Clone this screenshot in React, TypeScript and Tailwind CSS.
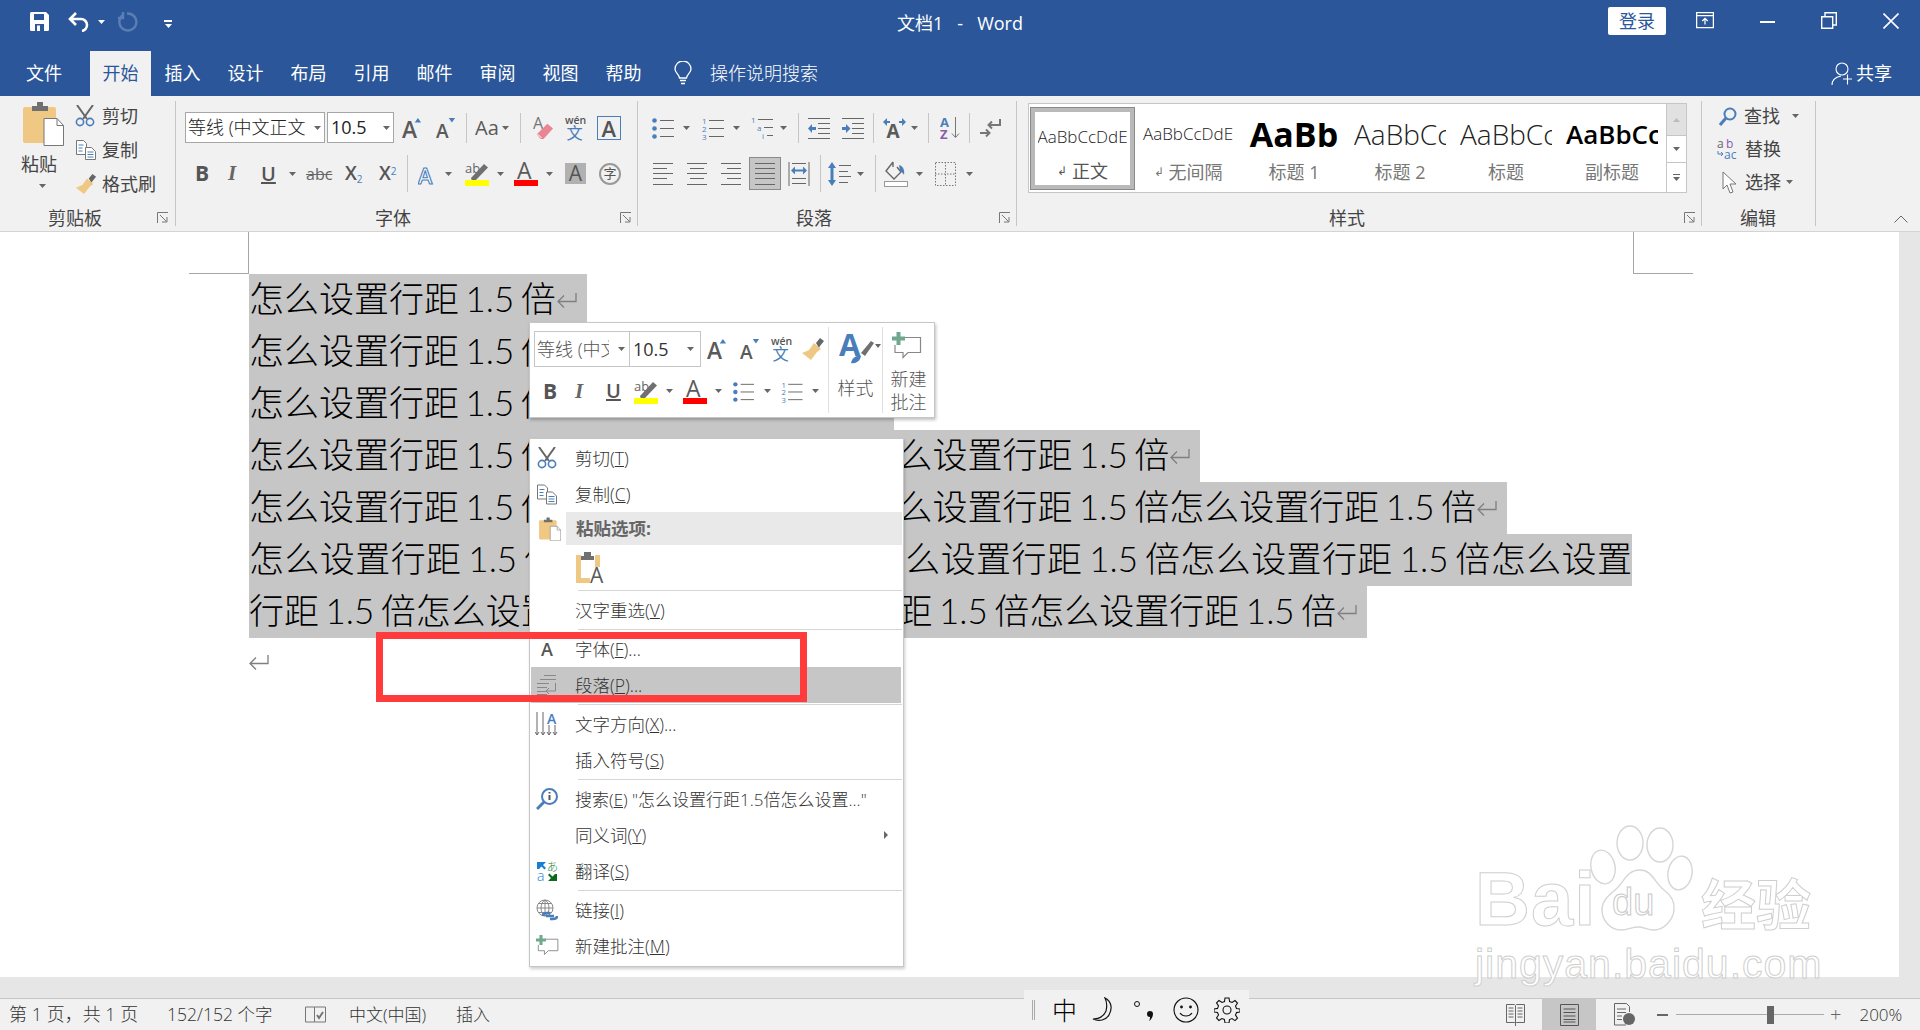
import React from "react";

const G = "#5a5a5a";
const B = "#4a7ebb";
const Dn = ({ c = "ml-[8px]", f = "#666" }: { c?: string; f?: string }) => (
  <svg viewBox="0 0 7 4" className={"w-[7px] h-[4px] shrink-0 " + c}><path d="M0 0h7L3.5 4z" fill={f} /></svg>
);
const Launcher = ({ c }: { c: string }) => (
  <svg viewBox="0 0 12 12" className={"w-[12px] h-[12px] shrink-0 " + c} fill="none" stroke="#777"><path d="M.5 11V.5H11M3 3l6.5 6.5M5 10h5V5" /></svg>
);
const Label = ({ w, children, launcher }: { w: string; children: React.ReactNode; launcher?: string }) => (
  <div className="mt-auto mb-[-1px] flex h-[18px] items-center text-[18px] leading-[18px] text-[#444]">
    <span className={"block text-center " + w}>{children}</span>
    {launcher && <Launcher c={launcher} />}
  </div>
);
const Sep = ({ c, h = "h-[37px]" }: { c: string; h?: string }) => <div className={"w-px shrink-0 bg-[#c6c6c6] " + h + " " + c} />;

const AIcon = ({ c, up, down, color = G, size = 25, stroke }: { c: string; up?: boolean; down?: boolean; color?: string; size?: number; stroke?: string }) => (
  <svg viewBox="0 0 22 24" className={"shrink-0 " + c}>
    <text x="0" y="23" fontSize={size} fontWeight="600" fill={color} stroke={stroke} strokeWidth={stroke ? 1.3 : 0}>A</text>
    {up && <path d="M14 6l3.5-5L21 6z" fill={B} />}
    {down && <path d="M14 1h7l-3.5 5z" fill={B} />}
  </svg>
);
const Wen = ({ c }: { c: string }) => (
  <svg viewBox="0 0 22 26" className={"shrink-0 " + c}>
    <text x="0" y="9" fontSize="11" fontWeight="600" fill="#555">wén</text>
    <text x="1.5" y="25" fontSize="17" fill={B}>文</text>
  </svg>
);
const Eraser = ({ c }: { c: string }) => (
  <svg viewBox="0 0 22 26" className={"shrink-0 " + c}>
    <text x="0" y="15" fontSize="17" fill="#777">A</text>
    <path d="M4 20L15 9l6 5-10 11H8z" fill="#ea8593" /><path d="M5 20l4 4" stroke="#fff" />
  </svg>
);
const Brush = ({ c }: { c: string }) => (
  <svg viewBox="0 0 24 24" className={"shrink-0 " + c}>
    <path d="M15 6l4-5 4 3-4 5-1 2z" fill="#666" />
    <path d="M13 6l7 6-4 3-6 8-9-7 7-3z" fill="#efc983" />
  </svg>
);
const Scissors = ({ c }: { c: string }) => (
  <svg viewBox="0 0 20 22" className={"shrink-0 " + c} fill="none">
    <path d="M2 0l10 14M18 0L8 14" stroke="#666" strokeWidth="2" />
    <circle cx="5" cy="17" r="3.6" stroke={B} strokeWidth="1.6" /><circle cx="15" cy="17" r="3.6" stroke={B} strokeWidth="1.6" />
  </svg>
);
const Copy = ({ c }: { c: string }) => (
  <svg viewBox="0 0 20 20" className={"shrink-0 " + c} fill="#fff" stroke="#777">
    <path d="M.5.5h7l3 3v11H.5z" /><path d="M9.5 7.5h6l4 4v8h-10z" />
    <path d="M2.5 5h5M2.5 8h4M2.5 11h4M11.5 12h6M11.5 14.500h6M11.500 17h6" stroke={B} />
  </svg>
);
const Paste = ({ c }: { c: string }) => (
  <svg viewBox="0 0 41 45" className={"shrink-0 " + c}>
    <rect x="0" y="6" width="33" height="36" rx="2" fill="#efc983" />
    <path d="M9 5h5V1h6v4h5v5H9z" fill="#707070" />
    <path d="M21 17.500h13l6.500 7v20H21z" fill="#fff" stroke="#777" /><path d="M34 17.500v7h6.500" fill="none" stroke="#777" />
  </svg>
);
const Lines = ({ c, d, w = 22, h = 22, color = "#666" }: { c: string; d: string; w?: number; h?: number; color?: string }) => (
  <svg viewBox={`0 0 ${w} ${h}`} className={"shrink-0 " + c} fill="none" stroke={color}><path d={d} /></svg>
);
const Bullets = ({ c }: { c: string }) => (
  <svg viewBox="0 0 22 22" className={"shrink-0 " + c}>
    <path d="M8 3.500h14M8 11.500h14M8 19.500h14" stroke="#666" />
    <circle cx="2.500" cy="3.500" r="2.300" fill={B} /><circle cx="2.500" cy="11.500" r="2.300" fill={B} /><circle cx="2.500" cy="19.500" r="2.300" fill={B} />
  </svg>
);
const Numbers = ({ c }: { c: string }) => (
  <svg viewBox="0 0 22 24" className={"shrink-0 " + c}>
    <path d="M7 4.500h15M7 12.500h15M7 20.500h15" stroke="#666" />
    <text x="0" y="8" fontSize="8" fill={B}>1</text><text x="0" y="16" fontSize="8" fill={B}>2</text><text x="0" y="24" fontSize="8" fill={B}>3</text>
  </svg>
);
const Multi = ({ c }: { c: string }) => (
  <svg viewBox="0 0 24 24" className={"shrink-0 " + c}>
    <path d="M7 3.500h15M13 11.500h9M16 19.500h6" stroke="#666" />
    <text x="0" y="7" fontSize="8" fill={B}>1</text><text x="6" y="15" fontSize="8" fill={B}>a</text><text x="11" y="23" fontSize="8" fill={B}>i</text>
  </svg>
);
const Indent = ({ c, flip }: { c: string; flip?: boolean }) => (
  <svg viewBox="0 0 22 22" className={"shrink-0 " + c}>
    <path d="M0 1.500h22M10 6.500h12M10 11.500h12M10 16.500h12M0 21.500h22" stroke="#666" />
    {flip ? <path d="M0 10h4V7l4.500 4.500L4 16v-3H0z" fill={B} /> : <path d="M8 10H4V7l-4 4.500L4 16v-3h4z" fill={B} />}
  </svg>
);
const AlignIcon = ({ c, d }: { c: string; d: string }) => <Lines c={c} d={d} w={20} h={24} />;

const Hl = ({ c }: { c: string }) => (
  <svg viewBox="0 0 24 25" className={"shrink-0 " + c}>
    <text x="0" y="12" fontSize="13" fill="#666">ab</text>
    <path d="M6 17L19 3l4 3.500L10 20H7z" fill="#707070" />
    <rect x="0" y="19" width="24" height="6" fill="#ffff00" />
  </svg>
);
const Fc = ({ c }: { c: string }) => (
  <svg viewBox="0 0 24 25" className={"shrink-0 " + c}>
    <text x="3" y="18" fontSize="23" fontWeight="500" fill={G}>A</text>
    <rect x="0" y="19" width="24" height="6" fill="#ff0000" />
  </svg>
);
const Comment = ({ c }: { c: string }) => (
  <svg viewBox="0 0 30 30" className={"shrink-0 " + c} fill="none">
    <path d="M12 5.500h16.500v15H16l-5 5v-5H3V13" stroke="#888" strokeWidth="1.200" />
    <path d="M4.500 0h4v4.500H13v4H8.500V13h-4V8.500H0v-4h4.500z" fill="#6fa88d" />
  </svg>
);

const Ribbon = () => (
  <div className="flex h-[136px] shrink-0 border-b border-[#d4d4d4] bg-[#f1f1f1] text-[18px] text-[#444]">
    {/* clipboard */}
    <div className="my-[5px] flex h-[125px] w-[176px] shrink-0 flex-col border-r border-[#c6c6c6]">
      <div className="flex">
        <div className="flex w-[74px] flex-col">
          <Paste c="ml-[23px] w-[41px] h-[45px]" />
          <span className="ml-[21px] mt-[8px] text-[18px] leading-[20px]">粘贴</span>
          <Dn c="ml-[39px] mt-[10px]" />
        </div>
        <div className="flex flex-col gap-[4px]">
          <div className="flex h-[30px] items-center"><Scissors c="ml-[1px] w-[20px] h-[22px]" /><span className="ml-[7px]">剪切</span></div>
          <div className="flex h-[30px] items-center"><Copy c="ml-[2px] w-[20px] h-[20px]" /><span className="ml-[6px]">复制</span></div>
          <div className="flex h-[30px] items-center"><Brush c="w-[24px] h-[22px]" /><span className="ml-[4px]">格式刷</span></div>
        </div>
      </div>
      <Label w="w-[150px]" launcher="ml-[7px]">剪贴板</Label>
    </div>
    {/* font */}
    <div className="my-[5px] flex h-[125px] w-[462px] shrink-0 flex-col border-r border-[#c6c6c6] pt-[11px]">
      <div className="flex h-[31px] items-center">
        <div className="ml-[9px] flex h-[31px] w-[140px] items-center overflow-hidden border border-[#a6a6a6] bg-white pl-[2px] text-[18px] font-light text-[#222]"><span className="w-[124px] overflow-hidden whitespace-nowrap">等线 (中文正文</span><Dn c="ml-[2px]" /></div>
        <div className="ml-[2px] flex h-[31px] w-[67px] items-center border border-[#a6a6a6] bg-white pl-[3px] text-[18px] text-[#222]"><span className="w-[50px]">10.5</span><Dn c="ml-[2px]" /></div>
        <AIcon up c="ml-[8px] w-[20px] h-[24px]" />
        <AIcon down size={21} c="ml-[14px] w-[20px] h-[24px]" />
        <Sep c="ml-[10px]" h="h-[30px]" />
        <span className="ml-[8px] text-[20px] leading-none text-[#5a5a5a]">Aa</span><Dn c="ml-[3px]" />
        <Sep c="ml-[11px]" h="h-[30px]" />
        <Eraser c="ml-[12px] w-[21px] h-[25px]" />
        <Wen c="ml-[11px] w-[21px] h-[26px]" />
        <div className="ml-[11px] flex h-[24px] w-[24px] items-center justify-center border border-[#4a7ebb] text-[22px] font-semibold leading-none text-[#555]">A</div>
      </div>
      <div className="mt-[14px] flex h-[33px] items-center text-[#555]">
        <span className="ml-[19px] w-[14px] text-[21px] font-bold leading-none">B</span>
        <span className="ml-[19px] w-[13px] text-[21px] font-bold italic leading-none text-[#666] [font-family:'Liberation_Serif',serif]">I</span>
        <span className="ml-[20px] w-[15px] text-[20px] font-semibold leading-none underline">U</span>
        <Dn c="ml-[13px]" />
        <span className="ml-[10px] w-[26px] text-[16px] leading-none text-[#666] line-through">abc</span>
        <span className="ml-[13px] w-[20px] text-[19px] font-semibold leading-none">X<sub className="text-[10px] font-normal text-[#4a7ebb]">2</sub></span>
        <span className="ml-[14px] w-[20px] text-[19px] font-semibold leading-none">X<sup className="text-[10px] font-normal text-[#4a7ebb]">2</sup></span>
        <Sep c="ml-[8px]" />
        <AIcon c="ml-[10px] w-[19px] h-[24px]" color="#fff" stroke={B} />
        <Dn c="ml-[8px]" />
        <Hl c="ml-[13px] w-[24px] h-[25px]" />
        <Dn c="ml-[8px]" />
        <Fc c="ml-[10px] w-[24px] h-[25px]" />
        <Dn c="ml-[8px]" />
        <div className="ml-[12px] flex h-[21px] w-[21px] items-center justify-center bg-[#b1b1b1] text-[21px] font-medium leading-none text-[#555]">A</div>
        <div className="ml-[13px] flex h-[22px] w-[22px] items-center justify-center rounded-full border-2 border-[#999] text-[13px] leading-none">字</div>
      </div>
      <Label w="w-[434px]" launcher="ml-[10px]">字体</Label>
    </div>
    {/* paragraph */}
    <div className="my-[5px] flex h-[125px] w-[379px] shrink-0 flex-col border-r border-[#c6c6c6] pt-[11px]">
      <div className="flex h-[31px] items-center">
        <Bullets c="ml-[14px] w-[22px] h-[22px]" /><Dn c="ml-[9px]" />
        <Numbers c="ml-[12px] w-[22px] h-[24px]" /><Dn c="ml-[9px]" />
        <Multi c="ml-[11px] w-[24px] h-[24px]" /><Dn c="ml-[5px]" />
        <Sep c="ml-[11px]" h="h-[30px]" />
        <Indent c="ml-[9px] w-[22px] h-[22px]" />
        <Indent flip c="ml-[12px] w-[22px] h-[22px]" />
        <Sep c="ml-[9px]" h="h-[30px]" />
        <svg viewBox="0 0 23 20" className="ml-[9px] h-[20px] w-[23px] shrink-0">
          <text x="3.500" y="20" fontSize="19" fontWeight="700" fill={G}>A</text>
          <path d="M0 4l4-4v3h3v2H4v3zM23 4l-4-4v3h-3v2h3v3z" fill={B} />
        </svg>
        <Dn c="ml-[5px]" />
        <Sep c="ml-[10px]" h="h-[30px]" />
        <svg viewBox="0 0 20 24" className="ml-[11px] h-[24px] w-[20px] shrink-0">
          <text x="0" y="11" fontSize="13" fontWeight="700" fill={B}>A</text>
          <text x="0" y="23" fontSize="13" fontWeight="700" fill="#8a5bab">Z</text>
          <path d="M15.500 1v20M12 17.500l3.500 4 3.500-4" fill="none" stroke="#777" />
        </svg>
        <Sep c="ml-[9px]" h="h-[30px]" />
        <svg viewBox="0 0 21 20" className="ml-[10px] h-[20px] w-[21px] shrink-0" fill="none" stroke="#777" strokeWidth="2">
          <path d="M20 1v6H9M12 3.500L8.500 7l3.500 3.500M0 15h9M6 11.500L9.500 15 6 18.500" />
        </svg>
      </div>
      <div className="mt-[14px] flex h-[33px] items-center">
        <AlignIcon c="ml-[15px] w-[20px] h-[24px]" d="M0 1.500h20M0 6.500h14M0 11.500h20M0 16.500h14M0 22.500h20" />
        <AlignIcon c="ml-[14px] w-[20px] h-[24px]" d="M0 1.500h20M3 6.500h14M0 11.500h20M3 16.500h14M0 22.500h20" />
        <AlignIcon c="ml-[14px] w-[20px] h-[24px]" d="M0 1.500h20M6 6.500h14M0 11.500h20M6 16.500h14M0 22.500h20" />
        <div className="ml-[8px] flex h-[33px] w-[32px] items-center justify-center border border-[#8a8a8a] bg-[#c6c6c6]">
          <AlignIcon c="w-[20px] h-[24px]" d="M0 1.500h20M0 6.500h20M0 11.500h20M0 16.500h20M0 22.500h20" />
        </div>
        <svg viewBox="0 0 22 24" className="ml-[7px] h-[24px] w-[22px] shrink-0">
          <path d="M1 0v24M21 0v24M4 1.500h14M4 16.500h14M4 21.500h14" stroke="#666" fill="none" />
          <path d="M3 8.500l4-4v3h8v-3l4 4-4 4v-3H7v3z" fill={B} />
        </svg>
        <Sep c="ml-[10px]" />
        <svg viewBox="0 0 23 24" className="ml-[7px] h-[24px] w-[23px] shrink-0">
          <path d="M4 0l4 6H5.500v12H8l-4 6-4-6h2.500V6H0z" fill={B} />
          <path d="M11 3.500h12M11 9.500h9M11 14.500h12M11 20.500h9" stroke="#666" fill="none" />
        </svg>
        <Dn c="ml-[6px]" />
        <Sep c="ml-[11px]" />
        <svg viewBox="0 0 24 26" className="ml-[8px] h-[26px] w-[24px] shrink-0">
          <path d="M9 1L2 10l8 8 7-7-4-5M9 1v5" fill="none" stroke="#666" strokeWidth="1.400" />
          <path d="M15 4c4 1 6 5 5 10-1-2-2-3-4-4z" fill={B} />
          <rect x="0.500" y="20.500" width="23" height="5" fill="#fff" stroke="#999" />
        </svg>
        <Dn c="ml-[8px]" />
        <svg viewBox="0 0 21 24" className="ml-[12px] h-[24px] w-[21px] shrink-0" fill="none" stroke="#777" strokeDasharray="1.500 1.500">
          <path d="M.5.500h20v23H.5zM10.500 0v24M0 12h21" />
        </svg>
        <Dn c="ml-[10px]" />
      </div>
      <Label w="w-[352px]" launcher="ml-[9px]">段落</Label>
    </div>
    {/* styles */}
    <div className="my-[5px] flex h-[125px] w-[685px] shrink-0 flex-col border-r border-[#c6c6c6] pt-[2px]">
      <div className="ml-[11px] flex h-[90px] w-[659px] border border-[#c6c6c6] bg-white">
        <div className="ml-[1px] mt-[3px] flex h-[83px] w-[105px] flex-col items-center border-[5px] border-[#b9b9b9] bg-white outline outline-1 outline-[#8a8a8a] [outline-offset:-1px]">
          <span className="mt-[14px] w-[90px] overflow-hidden whitespace-nowrap text-center text-[17px] font-light leading-[22px] text-[#222]">AaBbCcDdE</span>
          <span className="mt-[12px] flex items-center text-[18px] leading-[22px] text-[#555]"><span className="mr-[5px] text-[12px]">↲</span>正文</span>
        </div>
        {[
          ["AaBbCcDdE", "无间隔", "text-[17px] font-light leading-[22px] text-[#222] text-center", true],
          ["AaBb", "标题 1", "text-[34px] font-bold leading-[22px] text-black text-center", false],
          ["AaBbCc", "标题 2", "text-[28px] font-light leading-[22px] text-[#222]", false],
          ["AaBbCc", "标题", "text-[28px] font-light leading-[22px] text-[#222]", false],
          ["AaBbCc", "副标题", "text-[26px] font-semibold leading-[22px] text-black", false],
        ].map(([a, b, cl, ret], i) => (
          <div key={i} className="flex h-[88px] w-[106px] flex-col items-center pt-[19px]">
            <span className={"block h-[24px] w-[92px] overflow-hidden whitespace-nowrap " + cl}>{a}</span>
            <span className="mt-[14px] flex items-center text-[18px] leading-[22px] text-[#777]">{ret && <span className="mr-[5px] text-[12px]">↲</span>}{b}</span>
          </div>
        ))}
        <div className="ml-auto flex w-[20px] flex-col border-l border-[#c6c6c6]">
          <div className="flex h-[31px] items-center justify-center bg-[#e1e1e1]"><svg viewBox="0 0 7 4" className="h-[4px] w-[7px]"><path d="M0 4h7L3.500 0z" fill="#bbb" /></svg></div>
          <div className="flex h-[28px] items-center justify-center border-y border-[#c6c6c6]"><Dn c="" /></div>
          <div className="flex h-[29px] flex-col items-center justify-center gap-[2px]"><div className="h-px w-[7px] bg-[#666]" /><Dn c="" /></div>
        </div>
      </div>
      <Label w="w-[660px]" launcher="ml-[7px]">样式</Label>
    </div>
    {/* editing */}
    <div className="my-[5px] flex h-[125px] w-[114px] shrink-0 flex-col gap-[3px] border-r border-[#c6c6c6]">
      <div className="flex h-[30px] items-center">
        <svg viewBox="0 0 18 19" className="ml-[17px] h-[19px] w-[18px] shrink-0" fill="none"><circle cx="11" cy="7" r="5.500" stroke={B} strokeWidth="2" /><path d="M7 11l-6 7" stroke={B} strokeWidth="3" /></svg>
        <span className="ml-[7px]">查找</span><Dn c="ml-[12px]" />
      </div>
      <div className="flex h-[30px] items-center">
        <svg viewBox="0 0 23 20" className="ml-[15px] h-[20px] w-[23px] shrink-0">
          <text x="0" y="9" fontSize="12" fill="#666">a</text><text x="9" y="9" fontSize="12" fill="#8a5bab">b</text>
          <text x="7" y="20" fontSize="12" fill={B}>ac</text><path d="M1 12v3h5M4 13l2 2-2 2" fill="none" stroke={B} />
        </svg>
        <span className="ml-[5px]">替换</span>
      </div>
      <div className="flex h-[30px] items-center">
        <svg viewBox="0 0 16 23" className="ml-[20px] h-[23px] w-[16px] shrink-0"><path d="M1 1v17l4-4 3 8 3-1-3-8h6z" fill="#fff" stroke="#777" /></svg>
        <span className="ml-[7px]">选择</span><Dn c="ml-[5px]" />
      </div>
      <Label w="w-[112px]">编辑</Label>
    </div>
    <div className="ml-auto flex items-end pb-[8px] pr-[12px]">
      <svg viewBox="0 0 14 8" className="h-[8px] w-[14px]" fill="none" stroke="#666"><path d="M.5 7.500L7 1l6.500 6.500" /></svg>
    </div>
  </div>
);

const Tab = ({ children, c = "" }: { children: React.ReactNode; c?: string }) => (
  <div className={"flex h-[45px] w-[63px] shrink-0 items-center justify-center " + c}>{children}</div>
);

const Top = () => (
  <div className="h-[96px] shrink-0 bg-[#2b579a] text-white">
    <div className="flex h-[51px]">
      <div className="flex w-[600px] items-start pt-[12px]">
        <svg viewBox="0 0 19 19" className="ml-[30px] h-[19px] w-[19px] shrink-0"><path d="M0 1.500A1.500 1.500 0 011.500 0H16l3 3v14.500a1.500 1.500 0 01-1.500 1.500h-16A1.500 1.500 0 010 17.500z" fill="#fff" /><path d="M4 2h10v6H4z" fill="#2b579a" /><path d="M5 12h9v7H5z" fill="#2b579a" /><path d="M7 13.500h3V19H7z" fill="#fff" /></svg>
        <svg viewBox="0 0 23 20" className="ml-[19px] h-[20px] w-[23px] shrink-0" fill="none" stroke="#fff" strokeWidth="2.600"><path d="M8 1L2 7l6 6M2 7h11a6 6 0 016 6 6 6 0 01-5 6" /></svg>
        <Dn c="ml-[7px] mt-[8px]" f="#fff" />
        <svg viewBox="0 0 20 20" className="ml-[13px] h-[20px] w-[20px] shrink-0" fill="none" stroke="#5b7eb4" strokeWidth="2.400"><path d="M5 3a8.500 8.500 0 104 -1.500M5 0v6H0" /></svg>
        <div className="ml-[26px] mt-[8px] flex flex-col items-center gap-[2px]"><div className="h-[2px] w-[8px] bg-white" /><Dn c="" f="#fff" /></div>
      </div>
      <div className="w-[720px] whitespace-pre pt-[7px] text-center text-[18px] leading-[32px]">文档1   -   Word</div>
      <div className="flex flex-1 items-start pt-[7px]">
        <div className="ml-[288px] flex h-[28px] w-[58px] shrink-0 items-center justify-center rounded-[2px] bg-white text-[18px] text-[#2b579a]">登录</div>
        <svg viewBox="0 0 20 20" className="ml-[29px] mt-[5px] h-[18px] w-[20px] shrink-0" fill="none" stroke="#fff" strokeWidth="1.400"><path d="M.7.700h18.600v16.600H.7zM.7 4h18.600M10 14V7M7 10l3-3 3 3" /></svg>
        <div className="ml-[45px] mt-[14px] h-[2px] w-[15px] shrink-0 bg-white" />
        <svg viewBox="0 0 16 17" className="ml-[46px] mt-[5px] h-[17px] w-[16px] shrink-0" fill="none" stroke="#fff" strokeWidth="1.400"><path d="M.7 4.700h11v11.600H.7zM4 4.700V.7h11.300V13h-3.600" /></svg>
        <svg viewBox="0 0 16 16" className="ml-[46px] mt-[6px] h-[16px] w-[16px] shrink-0" fill="none" stroke="#fff" strokeWidth="1.600"><path d="M.5.500l15 15M15.500.500l-15 15" /></svg>
      </div>
    </div>
    <div className="flex h-[45px] text-[18px]">
      <Tab c="ml-[13px] !w-[62px]">文件</Tab>
      <Tab c="ml-[15px] !w-[61px] bg-[#f1f1f1] text-[#2b579a]">开始</Tab>
      {["插入", "设计", "布局", "引用", "邮件", "审阅", "视图", "帮助"].map((t) => <Tab key={t}>{t}</Tab>)}
      <svg viewBox="0 0 18 25" className="ml-[19px] mt-[10px] h-[25px] w-[18px] shrink-0" fill="none" stroke="#fff" strokeWidth="1.300"><path d="M5.500 17C5 13 1 12 1 8a8 8 0 0116 0c0 4-4 5-4.500 9zM6 19.500h6M7 22.500h4" /></svg>
      <span className="ml-[18px] flex items-center font-light">操作说明搜索</span>
      <div className="ml-auto mr-[28px] flex items-center">
        <svg viewBox="0 0 22 24" className="h-[24px] w-[22px] shrink-0" fill="none" stroke="#fff" strokeWidth="1.100"><circle cx="11" cy="7" r="6" /><path d="M1 23c0-5 4-8 9-9M12 17h9M16.500 12.500v10" /></svg>
        <span className="ml-[3px]">共享</span>
      </div>
    </div>
  </div>
);

const Ret = ({ c = "" }: { c?: string }) => (
  <svg viewBox="0 0 20 16" className={"h-[16px] w-[20px] shrink-0 " + c} fill="none" stroke="#7f7f7f" strokeWidth="1.300"><path d="M19 0v8.500H1M7 2.500L1 8.500l6 6" /></svg>
);
const U = "怎么设置行距 1.5 倍";
const TextLine = ({ t }: { t: string }) => (
  <div className="flex h-[52px] items-center whitespace-pre bg-[#c6c6c6] pr-[10px]">
    <span className="pb-[4px]">{t}</span><Ret c="ml-[1px] mt-[1px]" />
  </div>
);

const Doc = () => (
  <div className="flex h-[745px] shrink-0 overflow-hidden bg-white">
    <div className="w-[1899px] shrink-0">
      <div className="flex h-[42px] pl-[189px]">
        <div className="h-[42px] w-[60px] border-b border-r border-[#a6a6a6]" />
        <div className="w-[1384px]" />
        <div className="h-[42px] w-[60px] border-b border-l border-[#a6a6a6]" />
      </div>
      <div className="flex flex-col items-start pl-[249px] text-[35px] font-light text-black [font-family:'Lato','Noto_Sans_CJK_SC',sans-serif] [word-spacing:-3px]">
        <TextLine t={U} />
        <TextLine t={U + U} />
        <TextLine t={U + U} />
        <TextLine t={U + U + U} />
        <TextLine t={U + U + U + U} />
        <div className="flex h-[52px] w-[1383px] items-center bg-[#c6c6c6]"><span className="block w-full pb-[4px] [text-align-last:justify]">{U + U + U + U + "怎么设置"}</span></div>
        <TextLine t={"行距 1.5 倍" + U + U + U} />
        <div className="flex h-[52px] items-center"><Ret c="mb-[3px]" /></div>
      </div>
    </div>
    <div className="flex-1 bg-[#e6e6e6]" />
  </div>
);

const Status = () => (
  <div className="flex h-[53px] shrink-0 flex-col">
    <div className="h-[21px] bg-[#e6e6e6]" />
    <div className="flex h-[32px] items-center border-t border-[#c6c6c6] bg-[#f1f1f1] text-[17px] font-light text-[#333]">
      <span className="ml-[9px] w-[158px] whitespace-pre text-[18px]">第 1 页，共 1 页</span>
      <span className="w-[138px] whitespace-pre text-[17.500px]">152/152 个字</span>
      <svg viewBox="0 0 21 18" className="h-[18px] w-[21px] shrink-0" fill="none" stroke="#777"><path d="M.5 1h9v15h-9zM9.500 1h11v15h-11" /><path d="M12 9l2 3 4-6" stroke="#777" strokeWidth="2" /></svg>
      <span className="ml-[23px] w-[107px]">中文(中国)</span>
      <span>插入</span>
      <div className="ml-[534px] mt-[-9px] flex h-[40px] w-[225px] shrink-0 items-center bg-[#f1f1f1] text-[#000]">
        <div className="ml-[8px] h-[20px] w-[3px] border-x border-[#aaa]" />
        <span className="ml-[17px] text-[25px] leading-none text-black">中</span>
        <svg viewBox="0 0 24 26" className="ml-[14px] h-[26px] w-[24px] shrink-0" fill="none" stroke="#111" strokeWidth="1.200"><path d="M14 1c6 3 8 10 4 17-3 5-10 7-16 4 7 0 11-3 13-8 1-4 1-9-1-13z" /></svg>
        <svg viewBox="0 0 24 24" className="ml-[18px] h-[24px] w-[24px] shrink-0"><circle cx="4" cy="6" r="2.500" fill="none" stroke="#111" /><path d="M17 13a3 3 0 013 3c0 3-2 6-4 7 1-2 1-3 1-4a3 3 0 010-6z" fill="#111" /></svg>
        <svg viewBox="0 0 26 26" className="ml-[16px] h-[26px] w-[26px] shrink-0" fill="none" stroke="#111" strokeWidth="1.200"><circle cx="13" cy="13" r="12" /><circle cx="8.500" cy="10" r=".8" fill="#111" /><circle cx="17.500" cy="10" r=".8" fill="#111" /><path d="M7 16c3 4 9 4 12 0" /></svg>
        <svg viewBox="0 0 26 26" className="ml-[15px] h-[26px] w-[26px] shrink-0" fill="none" stroke="#111" strokeWidth="1.100"><circle cx="13" cy="13" r="4" /><path d="M11 1h4l.6 3.500 2.500 1L21 3.500 23.500 6l-2 3 1 2.500L26 12v3l-3.500.6-1 2.500 2 3-2.500 2.500-3-2-2.500 1L15 26h-4l-.6-3.500-2.500-1-3 2L2.500 21l2-3-1-2.500L0 15v-3l3.500-.6 1-2.500-2-3L5 3.500l3 2 2.500-1z" /></svg>
      </div>
      <svg viewBox="0 0 19 22" className="ml-[257px] h-[22px] w-[19px] shrink-0" fill="none" stroke="#666"><path d="M.5.500h8l1 1 1-1h8v18h-8l-1 1-1-1h-8zM2.500 4h5M2.500 7h5M2.500 10h5M2.500 13h5M11.500 4h5M11.500 7h5M11.500 10h5M11.500 13h5M9.500 2v20" /></svg>
      <div className="ml-[17px] flex h-[31px] w-[54px] shrink-0 items-center justify-center bg-[#c6c6c6]">
        <svg viewBox="0 0 19 22" className="h-[22px] w-[19px]" fill="none" stroke="#555"><path d="M.5.500h18v21H.5zM3.500 5h12M3.500 8.500h12M3.500 12h12M3.500 15.500h12M3.500 18h12" /></svg>
      </div>
      <svg viewBox="0 0 21 23" className="ml-[18px] h-[23px] w-[21px] shrink-0" fill="none" stroke="#666"><path d="M12 22H.5V.500h12l3 3V9M3 6h9M3 9.500h9M3 13h5M3 16.500h5" /><circle cx="15" cy="16" r="6" fill="#666" stroke="none" /></svg>
      <div className="ml-[22px] h-[2px] w-[11px] shrink-0 bg-[#666]" />
      <div className="ml-[8px] flex h-[18px] w-[148px] shrink-0 items-center">
        <div className="h-px w-[91px] bg-[#aaa]" />
        <div className="h-[18px] w-[7px] bg-[#666]" />
        <div className="h-px w-[50px] bg-[#aaa]" />
      </div>
      <span className="ml-[6px] text-[20px] leading-none text-[#666]">+</span>
      <span className="ml-[18px] text-[17px]">200%</span>
    </div>
  </div>
);

const MiniToolbar = () => (
  <div className="absolute left-[529px] top-[322px] flex h-[96px] w-[406px] border border-[#c6c6c6] bg-white text-[#555] shadow-[1px_2px_3px_rgba(0,0,0,0.25)]">
    <div className="my-[4px] flex w-[299px] shrink-0 flex-col border-r border-[#e0e0e0] pl-[4px] pt-[4px]">
      <div className="flex h-[36px] items-center">
        <div className="flex h-[36px] w-[96px] items-center border border-[#c6c6c6] pl-[2px] text-[18px] font-light"><span className="w-[72px] overflow-hidden whitespace-nowrap">等线 (中文正文</span><Dn c="ml-[9px]" /></div>
        <div className="flex h-[36px] w-[71px] items-center border border-l-0 border-[#c6c6c6] pl-[3px] text-[18px] text-[#333]"><span className="w-[52px]">10.5</span><Dn c="ml-[2px]" /></div>
        <AIcon up c="ml-[6px] w-[20px] h-[24px]" />
        <AIcon down size={21} c="ml-[13px] w-[20px] h-[24px]" />
        <Wen c="ml-[11px] w-[21px] h-[26px]" />
        <Brush c="ml-[9px] w-[24px] h-[24px]" />
      </div>
      <div className="mt-[9px] flex h-[30px] items-center">
        <span className="ml-[9px] w-[13px] text-[21px] font-bold leading-none">B</span>
        <span className="ml-[19px] w-[13px] text-[21px] font-bold italic leading-none text-[#666] [font-family:'Liberation_Serif',serif]">I</span>
        <span className="ml-[18px] w-[15px] text-[20px] font-semibold leading-none underline">U</span>
        <Hl c="ml-[13px] w-[24px] h-[25px]" />
        <Dn c="ml-[8px]" />
        <Fc c="ml-[10px] w-[24px] h-[25px]" />
        <Dn c="ml-[8px]" />
        <Bullets c="ml-[11px] w-[21px] h-[21px]" /><Dn c="ml-[10px]" />
        <Numbers c="ml-[10px] w-[22px] h-[23px]" /><Dn c="ml-[9px]" />
      </div>
    </div>
    <div className="my-[4px] flex w-[54px] shrink-0 flex-col items-center border-r border-[#e0e0e0] pt-[5px]">
      <svg viewBox="0 0 42 32" className="ml-[8px] h-[32px] w-[42px] shrink-0">
        <text x="0" y="24" fontSize="31" fontWeight="700" fill={B}>A</text>
        <path d="M22 21L32 9l3 2-9 13z" fill="#707070" /><path d="M12 31c1-5 5-8 10-7-1 5-5 8-10 7z" fill={B} />
        <path d="M36 12h6l-3 4z" fill="#666" />
      </svg>
      <span className="mt-[14px] text-[18px] font-light leading-[20px]">样式</span>
    </div>
    <div className="flex flex-1 flex-col items-center pt-[9px]">
      <Comment c="mr-[3px] w-[30px] h-[30px]" />
      <span className="mt-[6px] text-[18px] font-light leading-[23px]">新建</span>
      <span className="text-[18px] font-light leading-[23px]">批注</span>
    </div>
  </div>
);

const Row = ({ icon, children, c = "", r }: { icon?: React.ReactNode; children: React.ReactNode; c?: string; r?: React.ReactNode }) => (
  <div className={"flex h-[36px] w-[370px] shrink-0 items-center " + c}>
    <div className="flex w-[32px] shrink-0 items-center justify-center">{icon}</div>
    <span className="ml-[12px] whitespace-pre pt-[1px]">{children}</span>
    {r}
  </div>
);
const MSep = () => <div className="ml-[47px] h-[3px] w-[324px] shrink-0 py-[1px]"><div className="h-px bg-[#d6d6d6]" /></div>;

const Menu = () => (
  <div className="absolute left-[529px] top-[438px] flex h-[529px] w-[375px] flex-col border border-[#c6c6c6] bg-white pl-[1px] pt-[1px] text-[17.500px] font-light text-[#333] shadow-[1px_2px_3px_rgba(0,0,0,0.2)]">
    <Row icon={<Scissors c="w-[20px] h-[22px]" />}>剪切(<u>T</u>)</Row>
    <Row icon={<Copy c="w-[20px] h-[21px]" />}>复制(<u>C</u>)</Row>
    <div className="flex h-[33px] shrink-0 items-center">
      <div className="flex w-[30px] shrink-0 justify-end"><Paste c="w-[22px] h-[24px]" /></div>
      <div className="ml-[5px] flex h-[33px] w-[336px] items-center bg-[#e9e9e9] pl-[10px] font-bold text-[#666]">粘贴选项:</div>
    </div>
    <div className="flex h-[44px] shrink-0 items-center pl-[45px]">
      <svg viewBox="0 0 29 33" className="h-[33px] w-[29px] shrink-0">
        <path d="M0 4h5v23h9v5H0zM19 4h5v12h-5z" fill="#efc983" />
        <path d="M5 5h3V1h7v4h3v4H5z" fill="#707070" />
        <text x="14" y="32" fontSize="21" fontWeight="500" fill={G}>A</text>
      </svg>
    </div>
    <MSep />
    <Row>汉字重选(<u>V</u>)</Row>
    <MSep />
    <Row icon={<span className="text-[18px] font-semibold leading-none text-[#555]">A</span>}>字体(<u>F</u>)...</Row>
    <Row c="bg-[#c6c6c6]" icon={
      <svg viewBox="0 0 20 20" className="h-[20px] w-[20px]" fill="none" stroke="#888"><path d="M7 .500h12M3 4.500h16M0 8.500h12M0 12.500h10M0 16.500h10M0 19.500h10M18.500 8v8H9M12 13l-3 3 3 3" /></svg>
    }>段落(<u>P</u>)...</Row>
    <MSep />
    <Row icon={
      <svg viewBox="0 0 24 25" className="h-[25px] w-[24px]">
        <path d="M2 0v23M8 0v23M14 13v10M20 13v10M0 20l2 3 2-3M6 20l2 3 2-3M12 20l2 3 2-3M18 20l2 3 2-3" fill="none" stroke="#666" />
        <text x="12" y="12" fontSize="14" fontWeight="600" fill={B}>A</text>
      </svg>
    }>文字方向(<u>X</u>)...</Row>
    <Row>插入符号(<u>S</u>)</Row>
    <MSep />
    <Row icon={
      <svg viewBox="0 0 22 22" className="h-[22px] w-[22px]" fill="none"><circle cx="13.500" cy="8.500" r="7.500" stroke={B} strokeWidth="2" /><path d="M8 14l-7 7" stroke={B} strokeWidth="3" /><path d="M13.500 4v1.500M13.500 7v5" stroke="#555" strokeWidth="2" /></svg>
    }><span className="text-[17px]">搜索(<u>E</u>) "怎么设置行距1.5倍怎么设置..."</span></Row>
    <Row r={<svg viewBox="0 0 4 8" className="ml-auto mr-[13px] h-[8px] w-[4px] shrink-0"><path d="M0 0l4 4-4 4z" fill="#666" /></svg>}>同义词(<u>Y</u>)</Row>
    <Row icon={
      <svg viewBox="0 0 21 22" className="h-[22px] w-[21px]">
        <path d="M0 2h9L6 5l3 3-1.500 1.500L4.500 6.500 2 9H0z" fill="#1a7fd4" />
        <text x="10" y="11" fontSize="11" fill="#1b7f3b">あ</text>
        <text x="0" y="21" fontSize="14" fill="#1a7fd4">a</text>
        <path d="M20 21h-9l3-3-3-3 1.500-1.500 3 3L18 14h2z" fill="#0b6a1f" />
      </svg>
    }>翻译(<u>S</u>)</Row>
    <MSep />
    <Row icon={
      <svg viewBox="0 0 22 23" className="h-[23px] w-[22px]" fill="none">
        <circle cx="9" cy="9" r="8" stroke="#888" /><path d="M1 9h16M9 1v16M3 4.500h12M3 13.500h12M5 9c0-4 2-7 4-8 2 1 4 4 4 8s-2 7-4 8c-2-1-4-4-4-8z" stroke="#888" />
        <path d="M7 17c0-2 2-3 4-3h3M21 17c0 2-2 3-4 3h-3M10 17h8" stroke={B} strokeWidth="2.400" />
      </svg>
    }>链接(<u>I</u>)</Row>
    <Row icon={<Comment c="w-[23px] h-[23px]" />}>新建批注(<u>M</u>)</Row>
  </div>
);

const Watermark = () => (
  <div className="pointer-events-none absolute left-[1475px] top-[825px] flex h-[170px] w-[345px] flex-col text-white [-webkit-text-stroke:1px_#cfcfcf] [font-family:'Liberation_Sans',sans-serif]">
    <div className="flex h-[110px] items-end">
      <span className="w-[115px] text-[76px] font-bold leading-[72px] tracking-[1px]">Bai</span>
      <svg viewBox="0 0 103 110" className="h-[110px] w-[103px] shrink-0" fill="#fff" stroke="#d6d6d6" strokeWidth="1.400">
        <ellipse cx="13" cy="42" rx="12" ry="17" transform="rotate(-12 13 42)" />
        <ellipse cx="40" cy="18" rx="13" ry="17" />
        <ellipse cx="70" cy="20" rx="13" ry="17" />
        <ellipse cx="90" cy="48" rx="12" ry="17" transform="rotate(10 90 48)" />
        <path d="M50 45c12 0 14 12 24 20 8 6 11 12 10 20-1 10-10 20-20 20-7 0-10-3-16-3s-10 3-17 3c-11 0-19-10-19-20 0-9 6-14 13-20 9-7 11-20 25-20z" />
        <text x="22" y="90" fontSize="38" fontWeight="400" fill="#fff" stroke="#c8c8c8" strokeWidth="1">du</text>
      </svg>
      <span className="ml-[8px] text-[55px] font-bold leading-[68px] [font-family:'Noto_Sans_CJK_SC',sans-serif]">经验</span>
    </div>
    <span className="mt-[6px] whitespace-nowrap text-[41px] leading-[46px] tracking-[1px]">jingyan.baidu.com</span>
  </div>
);

export default function App() {
  return (
    <div className="relative flex h-[1030px] w-[1920px] flex-col overflow-hidden bg-white [font-family:'Open_Sans','Noto_Sans_CJK_SC',sans-serif]">
      <Top />
      <Ribbon />
      <Doc />
      <Status />
      <div className="absolute left-[530px] top-[418px] h-[5px] w-[363px] bg-[#c6c6c6]" />
      <MiniToolbar />
      <Menu />
      <div className="absolute left-[376px] top-[632px] h-[70px] w-[431px] border-[7px] border-[#ff3b3b]" />
      <Watermark />
    </div>
  );
}
